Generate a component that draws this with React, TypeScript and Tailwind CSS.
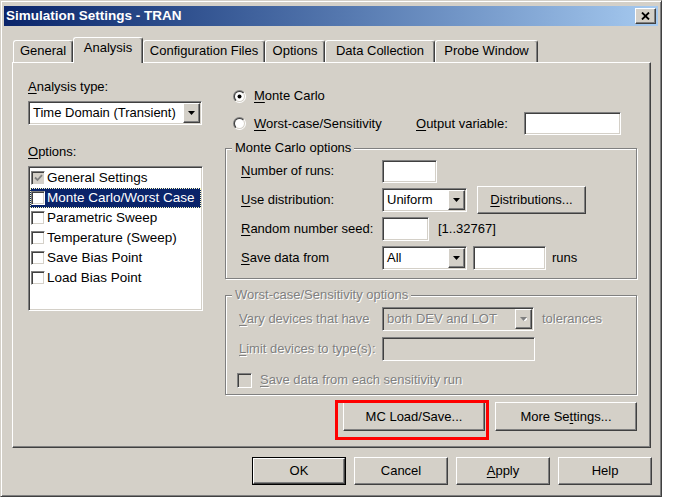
import React from 'react';

// classic 3D edges
const raised =
  'border border-t-white border-l-white border-r-[#404040] border-b-[#404040] shadow-[inset_-1px_-1px_0_#808080]';
const sunken =
  'border border-t-[#808080] border-l-[#808080] border-r-white border-b-white shadow-[inset_1px_1px_0_#404040,inset_-1px_-1px_0_#d4d0c8]';
const etched = 'border border-[#808080] shadow-[inset_1px_1px_0_#fff,1px_1px_0_#fff]';
const grayText = 'text-[#808080] [text-shadow:1px_1px_0_#fff]';

const K = ({ children }: { children: React.ReactNode }) => (
  <span className="underline underline-offset-[2px]">{children}</span>
);

function DropArrow({ disabled = false }: { disabled?: boolean }) {
  return (
    <div className={`${raised} w-[17px] h-full bg-[#d4d0c8] flex items-center justify-center shrink-0 ml-auto`}>
      <svg width="7" height="4" viewBox="0 0 7 4">
        {disabled && <path d="M1 1h7L4.5 5z" fill="#fff" />}
        <path d="M0 0h7L3.5 4z" fill={disabled ? '#808080' : '#000'} />
      </svg>
    </div>
  );
}

function Combo({ value, className, disabled = false }: { value: string; className: string; disabled?: boolean }) {
  return (
    <div className={`${sunken} ${disabled ? 'bg-[#d4d0c8]' : 'bg-white'} ${className} h-[24px] flex p-[1px] shrink-0`}>
      <span className={`pl-[3px] leading-[20px] whitespace-nowrap ${disabled ? grayText : ''}`}>{value}</span>
      <DropArrow disabled={disabled} />
    </div>
  );
}

function Field({ className, disabled = false }: { className: string; disabled?: boolean }) {
  return <div className={`${sunken} ${disabled ? 'bg-[#d4d0c8]' : 'bg-white'} ${className} shrink-0`} />;
}

function CheckBox({
  checked = false,
  disabled = false,
  className = 'w-[14px] h-[14px]',
}: {
  checked?: boolean;
  disabled?: boolean;
  className?: string;
}) {
  return (
    <div className={`${className} shrink-0 ${sunken} ${disabled ? 'bg-[#d4d0c8]' : 'bg-white'} flex items-center justify-center`}>
      {checked && (
        <svg width="9" height="8" viewBox="0 0 9 8">
          <path d="M1 3.5 L3.5 6 L8 1.2" fill="none" stroke={disabled ? '#808080' : '#000'} strokeWidth="1.8" />
        </svg>
      )}
    </div>
  );
}

function Radio({ checked = false, id }: { checked?: boolean; id: string }) {
  return (
    <svg width="13" height="13" viewBox="0 0 13 13" className="shrink-0">
      <defs>
        <linearGradient id={`o${id}`} x1="0" y1="0" x2="1" y2="1">
          <stop offset="0.5" stopColor="#808080" />
          <stop offset="0.5" stopColor="#ffffff" />
        </linearGradient>
        <linearGradient id={`i${id}`} x1="0" y1="0" x2="1" y2="1">
          <stop offset="0.5" stopColor="#404040" />
          <stop offset="0.5" stopColor="#d4d0c8" />
        </linearGradient>
      </defs>
      <circle cx="6.5" cy="6.5" r="6.5" fill={`url(#o${id})`} />
      <circle cx="6.5" cy="6.5" r="5.5" fill={`url(#i${id})`} />
      <circle cx="6.5" cy="6.5" r="4.5" fill="#fff" />
      {checked && <circle cx="6.5" cy="6.5" r="2" fill="#000" />}
    </svg>
  );
}

function Btn({ children, className }: { children: React.ReactNode; className: string }) {
  return (
    <button type="button" className={`${raised} bg-[#d4d0c8] flex items-center justify-center shrink-0 ${className}`}>
      {children}
    </button>
  );
}

function Tab({ label, className, active = false }: { label: string; className: string; active?: boolean }) {
  return (
    <div
      className={`${className} ${
        active ? 'h-[26px] -mb-[1px] z-10' : 'h-[22px]'
      } bg-[#d4d0c8] border-t border-l border-r border-t-white border-l-white border-r-[#404040] rounded-t-[3px] shadow-[inset_-1px_0_0_#808080] pt-[2px] text-center whitespace-nowrap`}
    >
      {label}
    </div>
  );
}

const options = [
  { label: 'General Settings', checked: true, disabled: true },
  { label: 'Monte Carlo/Worst Case', selected: true },
  { label: 'Parametric Sweep' },
  { label: 'Temperature (Sweep)' },
  { label: 'Save Bias Point' },
  { label: 'Load Bias Point' },
];

export default function App() {
  return (
    <div className="w-[675px] h-[499px] bg-white font-['Liberation_Sans',Arial,sans-serif] text-[13px] leading-[16px] text-black">
      <div className="w-[662px] h-[497px] bg-[#d4d0c8] border border-t-[#d4d0c8] border-l-[#d4d0c8] border-r-[#404040] border-b-[#404040] shadow-[inset_1px_1px_0_#fff,inset_-1px_-1px_0_#808080] pt-[5px] px-[3px] flex flex-col">
        {/* Title bar */}
        <div className="h-[20px] bg-linear-to-r from-[#0a246a] to-[#a6caf0] flex items-center pl-[2px] pr-[2px]">
          <span className="text-white font-bold text-[13.5px]">Simulation Settings - TRAN</span>
          <button type="button" className={`ml-auto w-[21px] h-[16px] ${raised} bg-[#d4d0c8] flex items-center justify-center`}>
            <svg width="9" height="8" viewBox="0 0 9 8">
              <path d="M1 0.5 L8 7.5 M8 0.5 L1 7.5" stroke="#000" strokeWidth="1.8" />
            </svg>
          </button>
        </div>

        {/* Tabs */}
        <div className="flex items-end h-[25px] mt-[11px] ml-[9px] relative z-10">
          <Tab label="General" className="w-[60px]" />
          <Tab label="Analysis" className="w-[70px]" active />
          <Tab label="Configuration Files" className="w-[122px]" />
          <Tab label="Options" className="w-[60px]" />
          <Tab label="Data Collection" className="w-[110px]" />
          <Tab label="Probe Window" className="w-[103px]" />
        </div>

        {/* Tab page */}
        <div className={`ml-[8px] w-[639px] h-[386px] shrink-0 ${raised} flex pl-[15px]`}>
          {/* left column */}
          <div className="w-[175px] pt-[16px] flex flex-col">
            <div>
              <K>A</K>nalysis type:
            </div>
            <Combo value="Time Domain (Transient)" className="w-[174px] mt-[6px]" />
            <div className="mt-[19px]">
              <K>O</K>ptions:
            </div>
            <div className={`${sunken} bg-white mt-[6px] h-[145px] w-[175px] p-[1px] flex flex-col text-[13.5px]`}>
              {options.map((o) => (
                <div
                  key={o.label}
                  className={`h-[20px] flex items-center ${o.selected ? 'bg-[#0a246a] text-white outline outline-1 outline-dotted outline-[#ffffc0] -outline-offset-1' : ''}`}
                >
                  <CheckBox checked={o.checked} disabled={o.disabled} className="w-[14px] h-[14px] ml-[1px]" />
                  <span className="ml-[2px] whitespace-nowrap">{o.label}</span>
                </div>
              ))}
            </div>
          </div>

          {/* right column */}
          <div className="w-[412px] ml-[22px] pt-[25px] flex flex-col">
            <div className="h-[16px] flex items-center">
              <span className="ml-[8px] flex">
                <Radio id="mc" checked />
              </span>
              <span className="ml-[8px]">
                <K>M</K>onte Carlo
              </span>
            </div>
            <div className="h-[23px] mt-[8px] flex items-center">
              <span className="ml-[8px] flex">
                <Radio id="wc" />
              </span>
              <span className="ml-[8px] w-[162px] whitespace-nowrap">
                <K>W</K>orst-case/Sensitivity
              </span>
              <span className="w-[108px] whitespace-nowrap">
                <K>O</K>utput variable:
              </span>
              <Field className="w-[97px] h-[23px]" />
            </div>

            {/* Monte Carlo options */}
            <div className={`relative mt-[13px] ${etched} pt-[10px] pb-[8px] pl-[15px] flex flex-col gap-[5px]`}>
              <span className="absolute left-[6px] top-[-9px] px-[3px] bg-[#d4d0c8] whitespace-nowrap">Monte Carlo options</span>
              <div className="h-[24px] flex items-center">
                <span className="w-[141px] whitespace-nowrap">
                  <K>N</K>umber of runs:
                </span>
                <Field className="w-[55px] h-[23px]" />
              </div>
              <div className="h-[24px] flex items-center">
                <span className="w-[141px] whitespace-nowrap">
                  <K>U</K>se distribution:
                </span>
                <Combo value="Uniform" className="w-[85px]" />
                <Btn className="ml-[10px] w-[109px] h-[28px]">
                  <span>
                    <K>D</K>istributions...
                  </span>
                </Btn>
              </div>
              <div className="h-[24px] flex items-center">
                <span className="w-[141px] whitespace-nowrap">
                  <K>R</K>andom number seed:
                </span>
                <Field className="w-[47px] h-[24px]" />
                <span className="ml-[9px]">[1..32767]</span>
              </div>
              <div className="h-[24px] flex items-center">
                <span className="w-[141px] whitespace-nowrap">
                  <K>S</K>ave data from
                </span>
                <Combo value="All" className="w-[85px]" />
                <Field className="ml-[6px] w-[73px] h-[24px]" />
                <span className="ml-[6px]">runs</span>
              </div>
            </div>

            {/* Worst-case options (disabled) */}
            <div className={`relative mt-[16px] ${etched} pt-[11px] pb-[6px] pl-[13px] flex flex-col ${grayText}`}>
              <span className="absolute left-[6px] top-[-9px] px-[3px] bg-[#d4d0c8] whitespace-nowrap">
                Worst-case/Sensitivity options
              </span>
              <div className="h-[24px] flex items-center">
                <span className="w-[143px] whitespace-nowrap">
                  <K>V</K>ary devices that have
                </span>
                <Combo value="both DEV and LOT" className="w-[152px]" disabled />
                <span className="ml-[8px]">tolerances</span>
              </div>
              <div className="h-[24px] mt-[6px] flex items-center">
                <span className="w-[143px] whitespace-nowrap">
                  <K>L</K>imit devices to type(s):
                </span>
                <Field className="w-[153px] h-[24px]" disabled />
              </div>
              <div className="h-[16px] mt-[11px] flex items-center -ml-[2px]">
                <CheckBox disabled className="w-[15px] h-[15px]" />
                <span className="ml-[8px] whitespace-nowrap">
                  <K>S</K>ave data from each sensitivity run
                </span>
              </div>
            </div>

            <div className="mt-[7px] h-[29px] flex justify-end gap-[10px]">
              <div className="relative">
                <Btn className="w-[142px] h-[29px]">MC Load/Save...</Btn>
                <div className="absolute left-[-8px] top-[-2px] right-[-4px] bottom-[-9px] border-[3px] border-[#ff0000] pointer-events-none" />
              </div>
              <Btn className="w-[142px] h-[29px]">
                <span>
                  More Se<K>t</K>tings...
                </span>
              </Btn>
            </div>
          </div>
        </div>

        {/* Dialog buttons */}
        <div className="mt-[9px] self-end mr-[6px] flex gap-[8px]">
          <div className="border border-black w-[94px] h-[28px] flex">
            <Btn className="w-full h-full">OK</Btn>
          </div>
          <Btn className="w-[94px] h-[28px]">Cancel</Btn>
          <Btn className="w-[94px] h-[28px]">
            <span>
              <K>A</K>pply
            </span>
          </Btn>
          <Btn className="w-[94px] h-[28px]">Help</Btn>
        </div>
      </div>
    </div>
  );
}
